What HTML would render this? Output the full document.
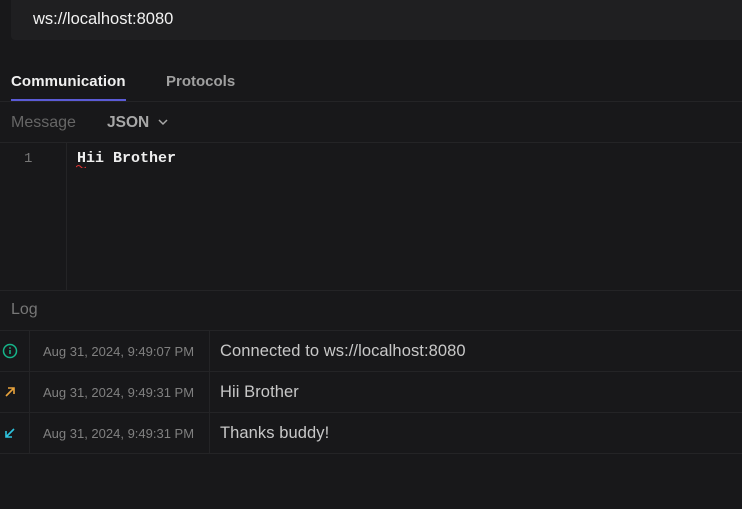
<!DOCTYPE html>
<html><head><style>
*{margin:0;padding:0;box-sizing:border-box}
body{width:742px;height:509px;background:#18181a;font-family:"Liberation Sans",sans-serif;position:relative;overflow:hidden;color:#ddd}
.abs{position:absolute}
.hl{position:absolute;left:0;width:742px;height:1px;background:#242426}
.vl{position:absolute;width:1px;background:#242426}
</style></head><body>
<div class="abs" style="left:11px;top:0;width:731px;height:40px;background:#1f1f21;border-bottom-left-radius:4px"></div>
<div class="abs" style="left:33px;top:10px;font-size:16.5px;color:#f2f2f2">ws://localhost:8080</div>
<div class="abs" style="left:11px;top:73px;font-size:15px;font-weight:bold;color:#f0f0f0;letter-spacing:0.1px">Communication</div>
<div class="abs" style="left:166px;top:73px;font-size:15px;font-weight:bold;color:#a0a0a0">Protocols</div>
<div class="abs" style="left:11px;top:99px;width:115px;height:2px;background:#5b5bd6"></div>
<div class="hl" style="top:101px"></div>
<div class="abs" style="left:11px;top:114px;font-size:16px;color:#666">Message</div>
<div class="abs" style="left:107px;top:114px;font-size:15.5px;font-weight:bold;color:#a8a8a8">JSON</div>
<svg class="abs" style="left:157px;top:117px" width="12" height="10"><path d="M2 3l4 4 4-4" stroke="#a8a8a8" stroke-width="1.5" fill="none"/></svg>
<div class="hl" style="top:142px"></div>
<div class="vl" style="left:66px;top:143px;height:147px"></div>
<div class="abs" style="left:24px;top:151px;font-size:14px;color:#777;font-family:'Liberation Mono',monospace">1</div>
<div class="abs" style="left:77px;top:150px;font-size:15px;font-weight:bold;color:#eee;font-family:'Liberation Mono',monospace">Hii Brother</div>
<svg class="abs" style="left:76px;top:164px" width="10" height="4"><path d="M0 3q2.5-3 5 0t5 0" stroke="#d33" fill="none"/></svg>
<div class="hl" style="top:290px"></div>
<div class="abs" style="left:11px;top:301px;font-size:16px;color:#777">Log</div>
<div class="hl" style="top:330px"></div>
<div class="hl" style="top:371px"></div>
<div class="hl" style="top:412px"></div>
<div class="hl" style="top:453px"></div>
<div class="vl" style="left:29px;top:331px;height:122px"></div>
<div class="vl" style="left:209px;top:331px;height:122px"></div>
<svg class="abs" style="left:2px;top:343px" width="16" height="16"><circle cx="8" cy="8" r="6.5" stroke="#16b58a" stroke-width="1.5" fill="none"/><path d="M8 7v4" stroke="#16b58a" stroke-width="1.5"/><circle cx="8" cy="5" r="0.9" fill="#16b58a"/></svg>
<svg class="abs" style="left:4px;top:386px" width="12" height="12"><path d="M2 10L10 2M4 2h6v6" stroke="#e8a33c" stroke-width="1.6" fill="none"/></svg>
<svg class="abs" style="left:4px;top:427px" width="12" height="12"><path d="M10 2L2 10M2 4v6h6" stroke="#2ec5e0" stroke-width="1.6" fill="none"/></svg>
<div class="abs" style="left:43px;top:344px;font-size:13px;color:#808080">Aug 31, 2024, 9:49:07 PM</div>
<div class="abs" style="left:43px;top:385px;font-size:13px;color:#808080">Aug 31, 2024, 9:49:31 PM</div>
<div class="abs" style="left:43px;top:426px;font-size:13px;color:#808080">Aug 31, 2024, 9:49:31 PM</div>
<div class="abs" style="left:220px;top:342px;font-size:16.5px;color:#c8c8c8;letter-spacing:0.08px">Connected to ws://localhost:8080</div>
<div class="abs" style="left:220px;top:383px;font-size:16.5px;color:#c8c8c8;letter-spacing:0.08px">Hii Brother</div>
<div class="abs" style="left:220px;top:424px;font-size:16.5px;color:#c8c8c8;letter-spacing:0.08px">Thanks buddy!</div>
</body></html>
